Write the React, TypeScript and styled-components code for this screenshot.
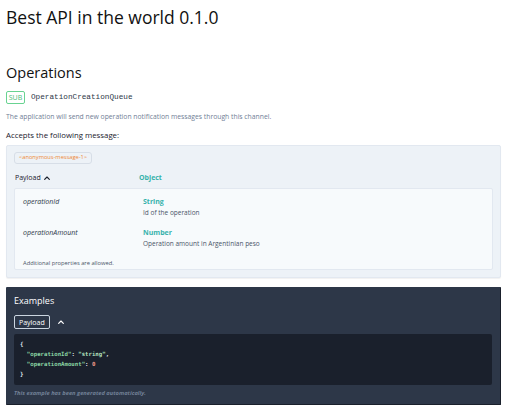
import React from 'react';
import styled, {createGlobalStyle} from "styled-components";

const GlobalStyle = createGlobalStyle`
  html, body {
    margin: 0;
    padding: 0;
    background: #ffffff;
  }
  body {
    font-family: "Open Sans", "Noto Sans", sans-serif;
    color: #1a202c;
  }
`

const properties = [
    {name: "operationId", type: "String", description: "Id of the operation"},
    {name: "operationAmount", type: "Number", description: "Operation amount in Argentinian peso"},
];

const ChevronUp = ({color}: { color: string }) => (
    <svg width="8" height="8" viewBox="0 0 24 24" fill="none" stroke={color} strokeWidth="3.5"
         strokeLinecap="round" strokeLinejoin="round">
        <polyline points="5 16 12 9 19 16"/>
    </svg>
);

export default function App() {
    return (
        <>
            <GlobalStyle/>
            <StyledPage>
                <StyledTitle>Best API in the world 0.1.0</StyledTitle>
                <StyledSectionTitle>Operations</StyledSectionTitle>
                <OperationHeader>
                    <SubBadge>SUB</SubBadge>
                    <ChannelName>OperationCreationQueue</ChannelName>
                </OperationHeader>
                <Description>The application will send new operation notification messages through this channel.</Description>
                <AcceptsText>Accepts the following message:</AcceptsText>

                <MessagePanel>
                    <TagRow>
                        <MessageTag>&lt;anonymous-message-1&gt;</MessageTag>
                    </TagRow>
                    <PayloadRow>
                        <PayloadToggle>Payload <ChevronUp color="#1a202c"/></PayloadToggle>
                        <TypeLabel>Object</TypeLabel>
                    </PayloadRow>
                    <PropertiesBox>
                        {properties.map(p => (
                            <PropertyRow key={p.name}>
                                <PropertyName>{p.name}</PropertyName>
                                <PropertyInfo>
                                    <TypeLabel>{p.type}</TypeLabel>
                                    <PropertyDescription>{p.description}</PropertyDescription>
                                </PropertyInfo>
                            </PropertyRow>
                        ))}
                        <AdditionalNote>Additional properties are allowed.</AdditionalNote>
                    </PropertiesBox>
                </MessagePanel>

                <ExamplesPanel>
                    <ExamplesTitle>Examples</ExamplesTitle>
                    <ExampleTabs>
                        <PayloadButton>Payload</PayloadButton>
                        <ChevronUp color="#ffffff"/>
                    </ExampleTabs>
                    <CodeBlock>
                        <Punct>{"{"}</Punct>{"\n"}
                        {"  "}<Key>"operationId"</Key><Punct>: </Punct><Str>"string"</Str><Punct>,</Punct>{"\n"}
                        {"  "}<Key>"operationAmount"</Key><Punct>: </Punct><Num>0</Num>{"\n"}
                        <Punct>{"}"}</Punct>
                    </CodeBlock>
                    <GeneratedNote>This example has been generated automatically.</GeneratedNote>
                </ExamplesPanel>
            </StyledPage>
        </>
    );
}

const StyledPage = styled.div`
  padding: 5px 11px 8px 6px;
  display: flex;
  flex-direction: column;
`

const StyledTitle = styled.h1`
  margin: 0;
  font-size: 17.5px;
  font-weight: 400;
  line-height: 24px;
  color: #111111;
`

const StyledSectionTitle = styled.h2`
  margin: 34px 0 0;
  font-size: 14.5px;
  font-weight: 400;
  line-height: 20px;
  color: #111111;
`

const OperationHeader = styled.div`
  display: flex;
  align-items: center;
  gap: 6px;
  margin-top: 8px;
  height: 13px;
`

const SubBadge = styled.span`
  display: inline-flex;
  align-items: center;
  justify-content: center;
  box-sizing: border-box;
  height: 13px;
  width: 19px;
  border: 1px solid #68d391;
  border-radius: 2px;
  color: #48bb78;
  font-size: 7px;
  line-height: 1;
`

const ChannelName = styled.span`
  font-family: "Liberation Mono", monospace;
  font-size: 7.7px;
  line-height: 1;
  color: #2d3748;
`

const Description = styled.p`
  margin: 8px 0 0;
  font-size: 6.8px;
  color: #718096;
  line-height: 10px;
`

const AcceptsText = styled.p`
  margin: 8px 0 0;
  font-size: 7.8px;
  color: #1a202c;
  line-height: 11px;
`

const MessagePanel = styled.div`
  margin-top: 4px;
  padding: 6px 7px 7px;
  background: #edf2f7;
  border: 1px solid #e2e8f0;
  border-radius: 2px;
  box-shadow: 0 1px 1px rgba(0, 0, 0, 0.06);
`

const TagRow = styled.div`
  display: flex;
`

const MessageTag = styled.span`
  display: inline-flex;
  align-items: center;
  box-sizing: border-box;
  height: 12px;
  padding: 0 4px;
  border: 1px solid #d7dee7;
  border-radius: 3px;
  color: #ed8936;
  font-size: 5.7px;
  line-height: 1;
`

const PayloadRow = styled.div`
  display: grid;
  grid-template-columns: 124px 1fr;
  align-items: center;
  padding: 9px 1px 5px;
  line-height: 10px;
`

const PayloadToggle = styled.span`
  display: inline-flex;
  align-items: center;
  gap: 2px;
  font-size: 7px;
  color: #1a202c;
`

const TypeLabel = styled.span`
  font-size: 7px;
  font-weight: 700;
  color: #38b2ac;
  line-height: 10px;
`

const PropertiesBox = styled.div`
  background: #f7fafc;
  border: 1px solid #e2e8f0;
  border-radius: 2px;
  padding: 8px 8px 2px;
`

const PropertyRow = styled.div`
  display: grid;
  grid-template-columns: 120px 1fr;
  margin-bottom: 10px;
`

const PropertyName = styled.span`
  font-size: 7px;
  font-style: italic;
  color: #2d3748;
  line-height: 10px;
`

const PropertyInfo = styled.div`
  display: flex;
  flex-direction: column;
`

const PropertyDescription = styled.span`
  font-size: 6.5px;
  color: #4a5568;
  line-height: 11px;
`

const AdditionalNote = styled.p`
  margin: 0;
  font-size: 5.75px;
  color: #4a5568;
  line-height: 8px;
`

const ExamplesPanel = styled.div`
  margin-top: 9px;
  padding: 8px 8px 7px;
  background: #2d3748;
  border-right: 1px solid #1a202c;
  border-bottom: 1px solid #1a202c;
  border-radius: 1px;
`

const ExamplesTitle = styled.h4`
  margin: 0;
  font-size: 9px;
  font-weight: 400;
  color: #ffffff;
  line-height: 12px;
`

const ExampleTabs = styled.div`
  display: flex;
  align-items: center;
  gap: 7px;
  margin-top: 8px;
`

const PayloadButton = styled.span`
  display: inline-flex;
  align-items: center;
  box-sizing: border-box;
  height: 14px;
  padding: 0 4px;
  border: 1px solid #cbd5e0;
  border-radius: 2px;
  color: #ffffff;
  font-size: 7px;
`

const CodeBlock = styled.pre`
  margin: 5px 0 0;
  padding: 5px 6px 6px;
  background: #1a202c;
  border-radius: 2px;
  font-family: "DejaVu Sans Mono", monospace;
  font-size: 5.7px;
  font-weight: 700;
  line-height: 10px;
  color: #e2e8f0;
  white-space: pre;
`

const Punct = styled.span`
  color: #e2e8f0;
`

const Key = styled.span`
  color: #8cd6a5;
`

const Str = styled.span`
  color: #b5e3c0;
`

const Num = styled.span`
  color: #f39b8a;
`

const GeneratedNote = styled.p`
  margin: 4px 0 0;
  font-size: 5.75px;
  font-style: italic;
  font-weight: 700;
  color: #718096;
  line-height: 8px;
`
